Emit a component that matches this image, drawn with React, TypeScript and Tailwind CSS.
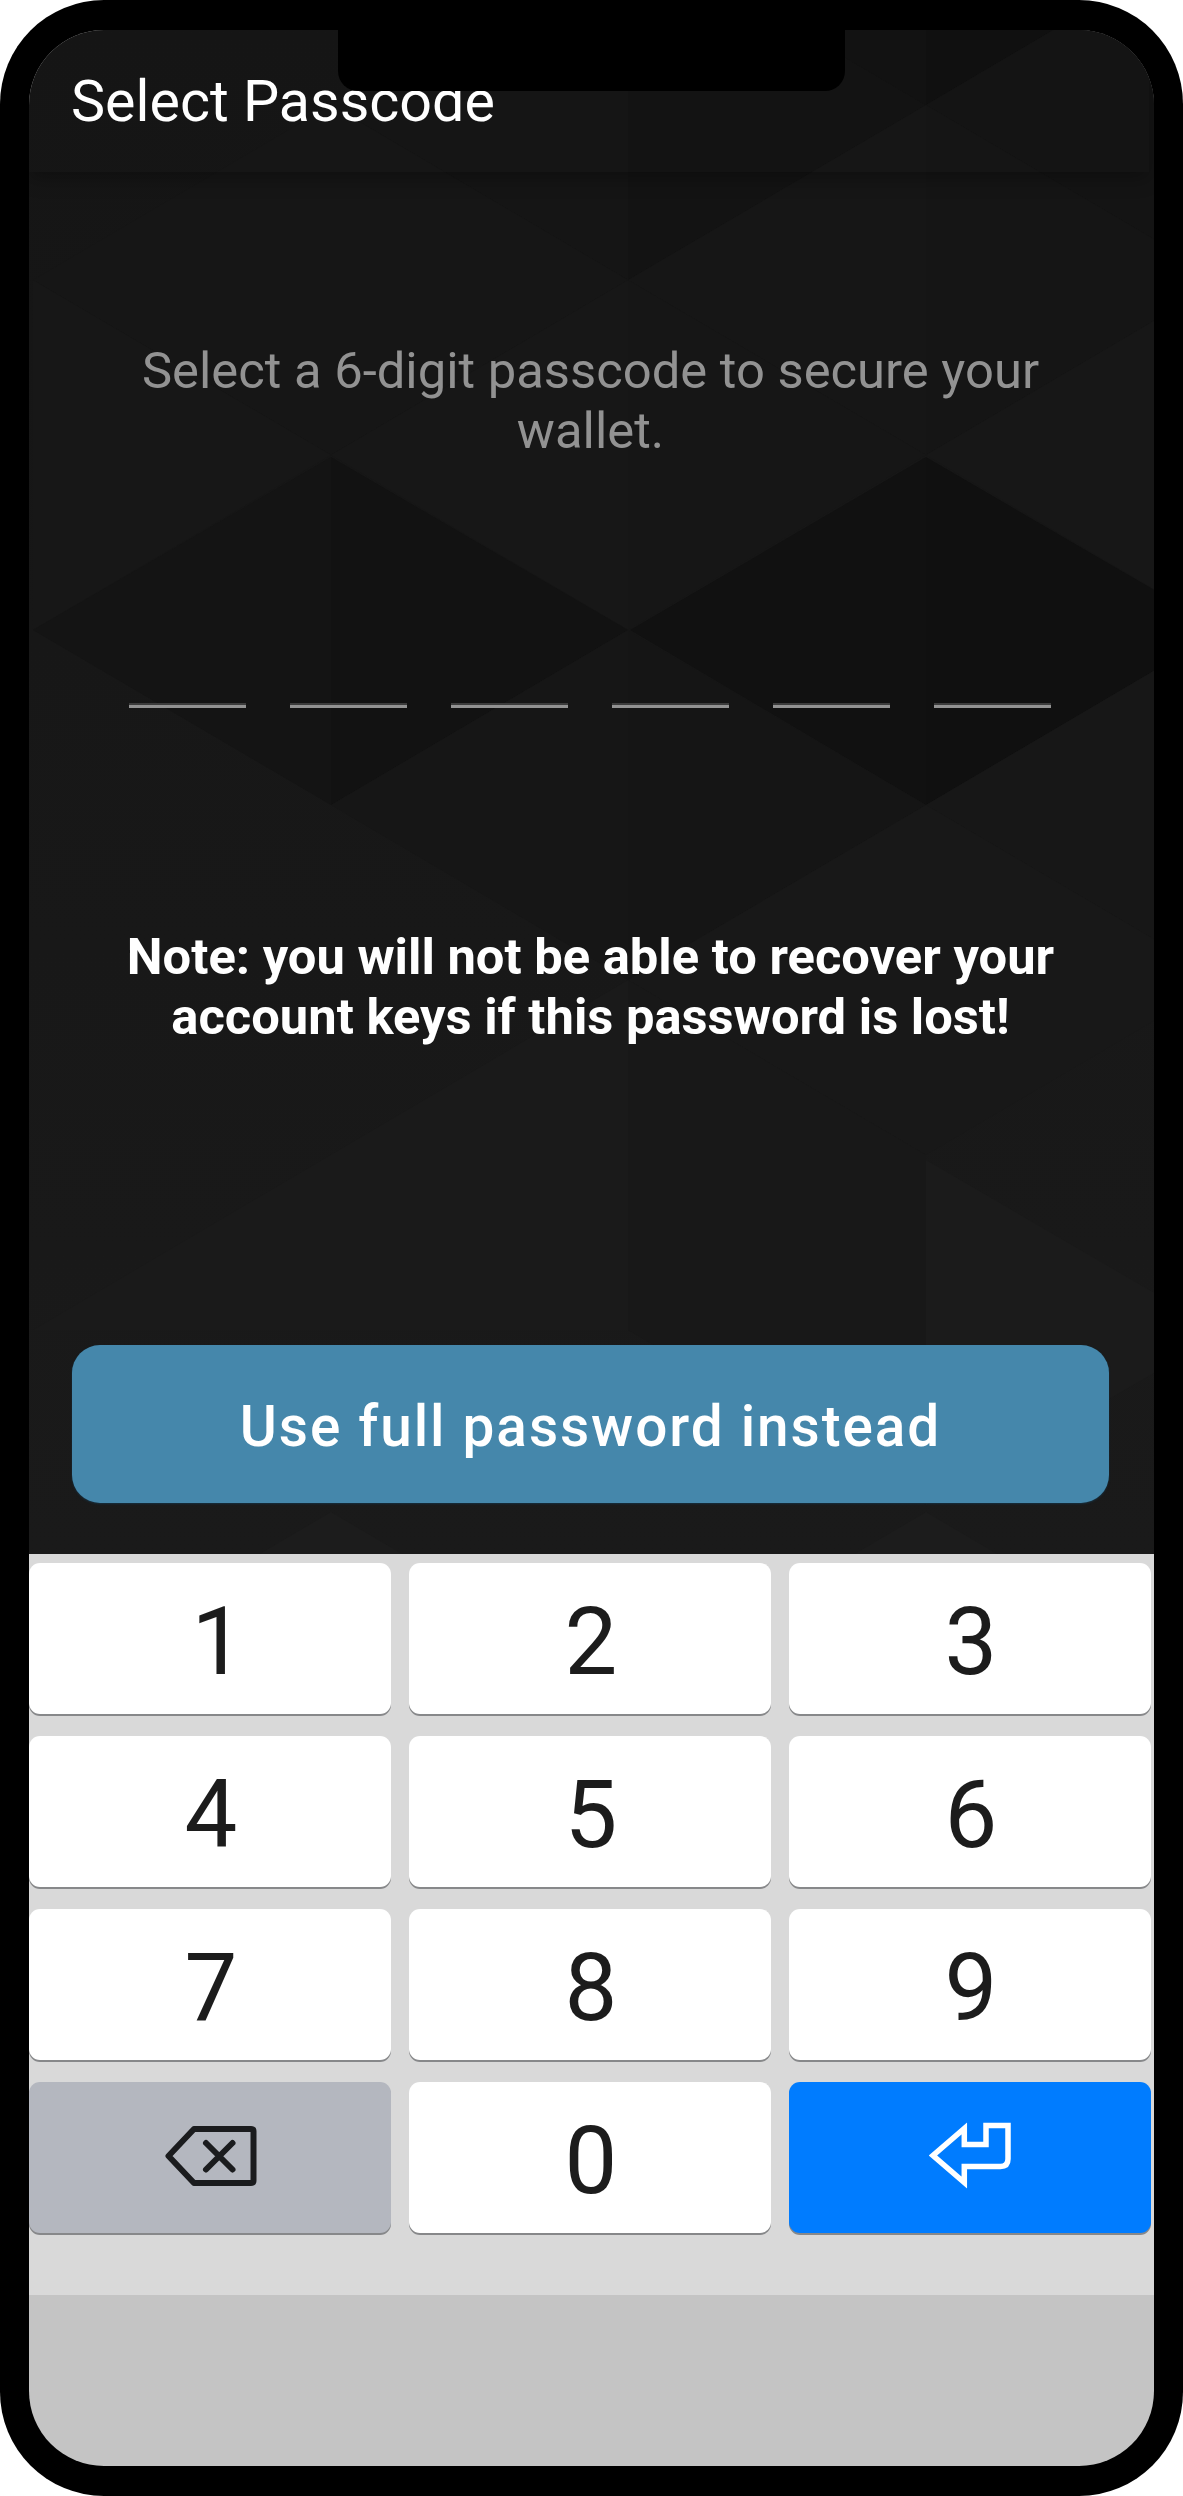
import React from "react";

const facets: [string, string][] = [
  ["331,105 628,-70 628,280", "#151515"],
  ["628,-70 926,105 628,280", "#131313"],
  ["628,-70 926,-245 926,105", "#121212"],
  ["926,-245 1223,-70 926,105", "#101010"],
  ["926,105 1223,-70 1223,280", "#141414"],
  ["926,105 926,455 628,280", "#161616"],
  ["926,105 1223,280 926,455", "#151515"],
  ["33,280 331,105 331,455", "#161616"],
  ["331,105 628,280 331,455", "#161616"],
  ["331,455 628,280 628,630", "#171717"],
  ["628,280 926,455 628,630", "#161616"],
  ["926,455 1223,280 1223,630", "#171717"],
  ["33,280 331,455 33,630", "#171717"],
  ["33,630 331,457 331,805", "#141414"],
  ["331,457 628,630 331,805", "#121212"],
  ["630,630 926,457 926,805", "#111111"],
  ["926,457 1223,630 926,805", "#101010"],
  ["331,805 628,630 628,980", "#161616"],
  ["628,630 926,805 628,980", "#151515"],
  ["926,805 1223,980 1223,630", "#171717"],
  ["926,805 926,1155 628,980", "#181818"],
  ["926,805 1223,980 926,1155", "#181818"],
  ["628,980 628,1330 33,1330", "#1a1a1a"],
  ["628,980 926,1155 926,1505 628,1330", "#181818"],
  ["926,1160 1223,1333 926,1505", "#1b1b1b"],
  ["331,1512 628,1687 33,1687", "#1c1c1c"],
  ["926,1512 1223,1687 628,1687", "#1c1c1c"],
];

function Backdrop() {
  return (
    <svg
      className="absolute inset-0"
      width="1125"
      height="1524"
      viewBox="29 30 1125 1524"
      aria-hidden="true"
    >
      <defs>
        <linearGradient id="base" x1="0" y1="0" x2="0" y2="1">
          <stop offset="0" stopColor="#151515" />
          <stop offset="1" stopColor="#1a1a1a" />
        </linearGradient>
      </defs>
      <rect x="29" y="30" width="1125" height="1524" fill="url(#base)" />
      {facets.map(([points, fill]) => (
        <polygon key={points} points={points} fill={fill} />
      ))}
    </svg>
  );
}

function BackspaceIcon() {
  return (
    <svg className="mb-[4px] ml-[2px]" width="92" height="60" viewBox="0 0 92 60" fill="none" stroke="#1b1c1e" strokeWidth="6" strokeLinecap="round" strokeLinejoin="round">
      <path d="M29 3H86Q88.500 3 88.500 5.500V54.500Q88.500 57 86 57H29L3.500 30Z" />
      <path d="M41 17L67.500 43.500M67.500 17L41 43.500" strokeWidth="6" />
    </svg>
  );
}

function EnterIcon() {
  return (
    <svg className="mb-[4px]" width="82" height="67" viewBox="0 0 82 67" fill="none" stroke="#ffffff" strokeWidth="5.500">
      <path d="M35.300 6.500V22.500H57V3.500H79V37Q79 44.500 71.500 44.500H35.300V60.500L4 33.500Z" />
    </svg>
  );
}

function Key({ children, tone = "white" }: { children: React.ReactNode; tone?: "white" | "gray" | "blue" }) {
  const tones = {
    white: "bg-white",
    gray: "bg-[#b4b7bf]",
    blue: "bg-[#007cff]",
  };
  return (
    <button
      className={`flex h-[151px] items-center justify-center rounded-[11px] text-[94px] leading-none text-[#1c1c1c] shadow-[0_2px_0_#87888a] ${tones[tone]}`}
    >
      {children}
    </button>
  );
}

export default function App() {
  return (
    <div className="h-[2496px] w-[1183px] bg-white font-['Roboto',sans-serif]">
      <div className="h-full w-full rounded-[104px] bg-black px-[29px] py-[30px]">
        <div className="relative flex h-full flex-col overflow-hidden rounded-[75px] bg-[#c4c4c4]">
          <main className="relative flex h-[1524px] flex-col">
            <Backdrop />
            <header className="relative mr-[5px] h-[142px] pl-[42px] pt-[38px] shadow-[0_6px_18px_rgba(0,0,0,0.3)]">
              <h1 className="text-[57.400px] leading-[68px] whitespace-nowrap text-white">Select Passcode</h1>
            </header>
            <p className="relative mt-[169px] -ml-[2px] text-center text-[50.750px] leading-[60px] text-[#929292]">
              Select a 6-digit passcode to secure your
              <br />
              wallet.
            </p>
            <div className="relative mt-[242px] ml-[100px] flex gap-[44px]">
              {[0, 1, 2, 3, 4, 5].map((i) => (
                <div key={i} className="h-[5px] w-[117px] border-t-2 border-[#3c3c3c] bg-[#929292]" />
              ))}
            </div>
            <p className="relative mt-[219px] -ml-[2px] text-center text-[50.700px] leading-[60px] font-bold text-white">
              Note: you will not be able to recover your
              <br />
              account keys if this password is lost!
            </p>
            <button className="relative mt-[298px] ml-[43px] flex h-[158px] w-[1037px] items-center justify-center rounded-[28px] bg-[#4587ab] pt-[5px] text-[56.700px] font-medium tracking-[1.950px] text-white shadow-[0_1px_2px_#173040]">
              Use full password instead
            </button>
          </main>
          <section className="grid h-[741px] grid-cols-[362px_362px_362px] content-start gap-x-[18px] gap-y-[22px] bg-[#d9d9d9] pt-[9px]">
            {["1", "2", "3", "4", "5", "6", "7", "8", "9"].map((d) => (
              <Key key={d}>
                <span className={d === "1" ? "pt-[6px] pl-[16px]" : "pt-[6px] pl-[2px]"}>{d}</span>
              </Key>
            ))}
            <Key tone="gray">
              <BackspaceIcon />
            </Key>
            <Key>
              <span className="pt-[6px] pl-[2px]">0</span>
            </Key>
            <Key tone="blue">
              <EnterIcon />
            </Key>
          </section>
          <div className="absolute top-0 left-[309px] h-[61px] w-[507px] rounded-b-[20px] bg-black" />
        </div>
      </div>
    </div>
  );
}
